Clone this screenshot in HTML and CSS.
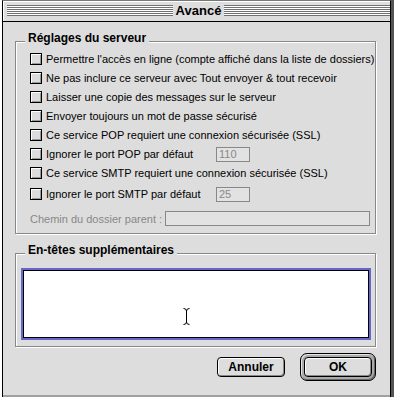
FILE: index.html
```html
<!DOCTYPE html>
<html lang="fr">
<head>
<meta charset="utf-8">
<title>Avancé</title>
<link rel="stylesheet" href="styles.css">
</head>
<body>
<div class="window">
  <div class="titlebar">
    <div class="stripes"></div>
    <div class="title">Avancé</div>
    <div class="stripes"></div>
  </div>
  <div class="content">
    <div class="group server">
      <div class="group-title">Réglages du serveur</div>
      <div class="rows">
        <div class="row"><span class="cb"></span><span class="label">Permettre l'accès en ligne (compte affiché dans la liste de dossiers)</span></div>
        <div class="row"><span class="cb"></span><span class="label">Ne pas inclure ce serveur avec Tout envoyer &amp; tout recevoir</span></div>
        <div class="row"><span class="cb"></span><span class="label">Laisser une copie des messages sur le serveur</span></div>
        <div class="row"><span class="cb"></span><span class="label">Envoyer toujours un mot de passe sécurisé</span></div>
        <div class="row"><span class="cb"></span><span class="label">Ce service POP requiert une connexion sécurisée (SSL)</span></div>
        <div class="row"><span class="cb"></span><span class="label fixed">Ignorer le port POP par défaut</span><span class="field small">110</span></div>
        <div class="row"><span class="cb"></span><span class="label">Ce service SMTP requiert une connexion sécurisée (SSL)</span></div>
        <div class="row spaced"><span class="cb"></span><span class="label fixed">Ignorer le port SMTP par défaut</span><span class="field small">25</span></div>
      </div>
      <div class="path-row"><span class="label disabled">Chemin du dossier parent :</span><span class="field wide"></span></div>
    </div>
    <div class="group headers">
      <div class="group-title">En-têtes supplémentaires</div>
      <div class="textarea">
        <svg class="ibeam" width="7" height="17" viewBox="0 0 7 17"><path d="M0.5 0.5 Q3.5 0.5 3.5 3 V14 Q3.5 16.5 0.5 16.5 M6.5 0.5 Q3.5 0.5 3.5 3 M3.5 14 Q3.5 16.5 6.5 16.5" fill="none" stroke="#000" stroke-width="1"/></svg>
      </div>
    </div>
    <div class="buttons">
      <div class="btn">Annuler</div>
      <div class="default-ring"><div class="btn">OK</div></div>
    </div>
  </div>
</div>
</body>
</html>
```

FILE: styles.css
```css
html, body {
  margin: 0;
  padding: 0;
}

body {
  width: 394px;
  height: 397px;
  overflow: hidden;
  background: #fff;
  font-family: "Liberation Sans", Arial, sans-serif;
  font-size: 11px;
  color: #000;
}

.window {
  margin-left: 2px;
  width: 389px;
  height: 397px;
  box-sizing: border-box;
  border: 1px solid #000;
  border-top-color: #777;
  border-bottom: none;
  background: #ddd;
  box-shadow: 3px 0 0 #555;
  display: flex;
  flex-direction: column;
}

.titlebar {
  height: 21px;
  box-sizing: border-box;
  border-bottom: 1px solid #000;
  background: #ddd;
  box-shadow: inset 1px 1px 0 #fff;
  display: flex;
  align-items: flex-start;
  padding-left: 4px;
}

.stripes {
  flex: 1;
  height: 11px;
  margin-top: 4px;
  background: repeating-linear-gradient(to bottom, #707070 0, #707070 1px, #fff 1px, #fff 2px);
}

.title {
  font-size: 13px;
  font-weight: bold;
  line-height: 20px;
  padding: 0 3px;
  white-space: nowrap;
}

.content {
  flex: 1;
  padding: 19px 14px 0 12px;
  display: flex;
  flex-direction: column;
  box-shadow: inset 0 -2px 0 #a0a0a0;
}

.group {
  border: 1px solid #888;
  box-shadow: inset 1px 1px 0 #fff, 1px 1px 0 #fff;
  display: flex;
  flex-direction: column;
}

.group-title {
  align-self: flex-start;
  margin: -10px 0 0 9px;
  padding: 0 3px;
  background: #ddd;
  font-size: 12px;
  font-weight: bold;
  line-height: 12px;
  white-space: nowrap;
}

.rows {
  display: flex;
  flex-direction: column;
  gap: 1px;
  margin-top: 6px;
  padding-left: 14px;
}

.row {
  height: 18px;
  display: flex;
  align-items: center;
}

.row.spaced {
  margin-top: 2px;
}

.cb {
  flex: none;
  width: 12px;
  height: 12px;
  box-sizing: border-box;
  border: 1px solid #000;
  background: #dcdcdc;
  box-shadow: inset 1px 1px 0 #fff, inset -1px -1px 0 #999;
  margin-right: 4px;
}

.label {
  white-space: nowrap;
  line-height: 12px;
}

.label.fixed {
  width: 170px;
}

.label.disabled {
  color: #888;
  margin-right: 3px;
}

.field {
  box-sizing: border-box;
  height: 15px;
  border: 1px solid #888;
  background: #e2e2e2;
  color: #888;
  padding-left: 2px;
  line-height: 13px;
}

.field.small {
  width: 34px;
}

.field.wide {
  flex: 1;
}

.path-row {
  display: flex;
  align-items: center;
  height: 15px;
  margin: 8px 0 7px 0;
  padding: 0 5px 0 14px;
}

.headers {
  margin-top: 19px;
}

.textarea {
  position: relative;
  height: 68px;
  box-sizing: border-box;
  margin: 14px 6px 8px 7px;
  border: 1px solid #000;
  background: #fff;
  box-shadow: 0 0 0 2px #6666cc;
}

.ibeam {
  position: absolute;
  left: 159px;
  top: 37px;
}

.buttons {
  display: flex;
  justify-content: flex-end;
  align-items: center;
  gap: 15px;
  height: 28px;
  margin-top: 6px;
}

.btn {
  width: 68px;
  height: 20px;
  box-sizing: border-box;
  border: 1px solid #000;
  border-radius: 4px;
  background: #ddd;
  box-shadow: inset 1px 1px 0 #fff, inset -1px -1px 0 #888;
  font-size: 12px;
  font-weight: bold;
  display: flex;
  align-items: center;
  justify-content: center;
}

.default-ring {
  padding: 3px;
  border: 1px solid #000;
  border-radius: 7px;
  background: #aaa;
  box-shadow: inset 1px 1px 0 #e6e6e6, inset -1px -1px 0 #666;
}
```
